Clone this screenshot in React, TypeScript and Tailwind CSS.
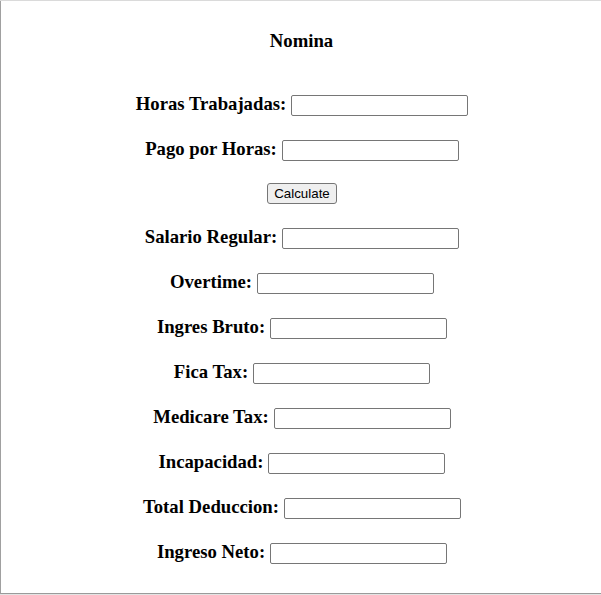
import React from "react";

const serif = { fontFamily: '"Liberation Serif", "Times New Roman", serif' };

function Row({ label, h = 45 }: { label: string; h?: number }) {
  return (
    <div
      className={`flex justify-center items-baseline gap-[5px] pl-[2px] shrink-0 ${h === 45 ? "h-[45px]" : "h-[44px]"}`}
    >
      <label className="font-bold text-[18.72px] leading-[22px] text-black whitespace-nowrap" style={serif}>
        {label}
      </label>
      <input
        type="text"
        className="w-[177px] h-[21px] border border-[#767676] rounded-[2px] bg-white px-[2px] text-[13.33px] outline-none"
        style={{ fontFamily: '"Liberation Sans", Arial, sans-serif' }}
      />
    </div>
  );
}

export default function App() {
  const rows = [
    "Salario Regular:",
    "Overtime:",
    "Ingres Bruto:",
    "Fica Tax:",
    "Medicare Tax:",
    "Incapacidad:",
    "Total Deduccion:",
    "Ingreso Neto:",
  ];
  return (
    <div className="w-[601px] h-[595px] bg-white border-t border-t-[#dadada] border-b border-b-[#e3e3e3] flex flex-col overflow-hidden">
      <div className="h-[593px] border-l border-l-[#a0a0a0] border-b border-b-[#9a9a9a] flex flex-col">
        <div
          className="mt-[29px] h-[22px] text-center font-bold text-[18.72px] leading-[22px] text-black shrink-0 pl-[1px]"
          style={serif}
        >
          Nomina
        </div>
        <div className="h-[41px] shrink-0" />
        <Row label="Horas Trabajadas:" />
        <Row label="Pago por Horas:" />
        <div className="h-[43px] shrink-0 flex justify-center items-start pl-[2px]">
          <button
            className="w-[70px] h-[21px] bg-[#efefef] border border-[#767676] rounded-[3px] text-[13.33px] leading-[15px] text-black"
            style={{ fontFamily: '"Liberation Sans", Arial, sans-serif' }}
          >
            Calculate
          </button>
        </div>
        {rows.map((r) => (
          <Row key={r} label={r} />
        ))}
      </div>
    </div>
  );
}
